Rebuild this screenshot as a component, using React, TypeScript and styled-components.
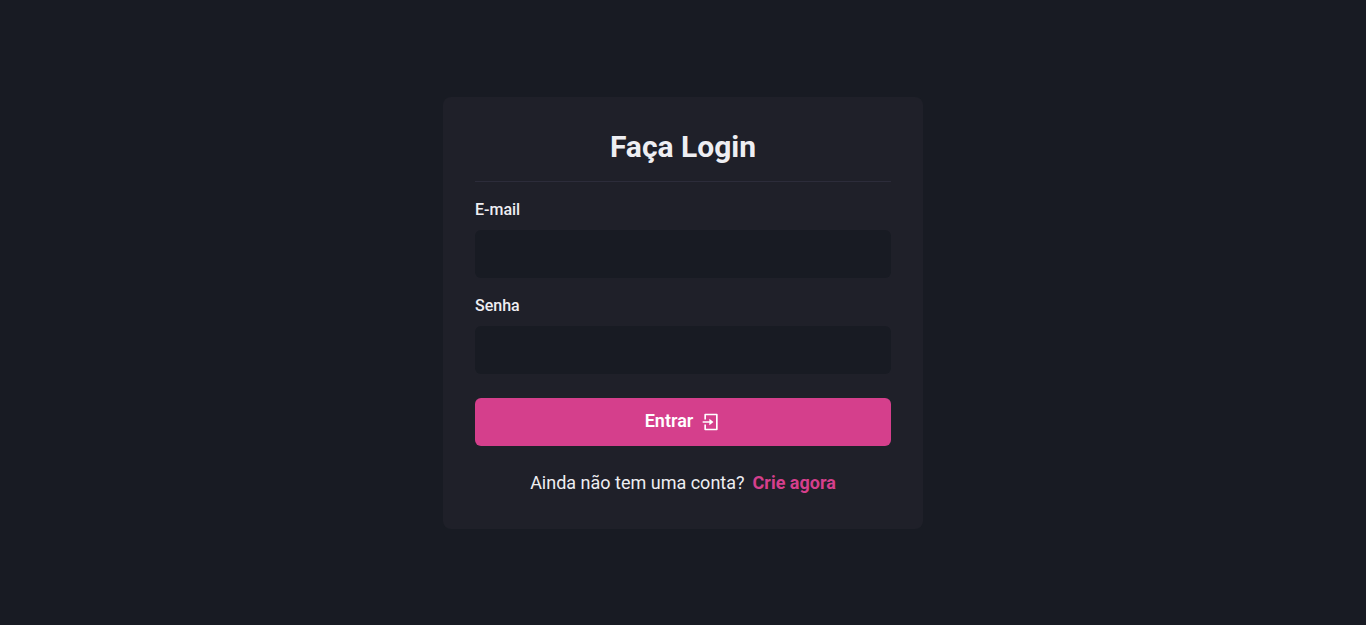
import React from "react";
import styled, { createGlobalStyle } from "styled-components";
import { RiLoginBoxLine } from "react-icons/ri";

const GlobalStyle = createGlobalStyle`
  *, *::before, *::after { box-sizing: border-box; margin: 0; padding: 0; }
  body { background: #181b23; color: #eeeef2; font-family: Roboto, sans-serif; }
`;

const Page = styled.main`
  display: flex;
  align-items: center;
  justify-content: center;
  height: 100vh;
`;

const Card = styled.form`
  display: flex;
  flex-direction: column;
  width: 480px;
  height: 432px;
  padding: 32px;
  border-radius: 8px;
  background: #1f2029;
`;

const Title = styled.h1`
  height: 36px;
  font-size: 30px;
  line-height: 36px;
  font-weight: 700;
  text-align: center;
`;

const Divider = styled.hr`
  margin: 16px 0;
  border: 0;
  border-bottom: 1px solid #353646;
  opacity: 0.6;
`;

const Field = styled.div`
  display: flex;
  flex-direction: column;
  margin-bottom: 16px;
`;

const Label = styled.label`
  margin-bottom: 8px;
  font-size: 16px;
  line-height: 24px;
  font-weight: 500;
`;

const Input = styled.input`
  width: 100%;
  height: 48px;
  padding: 0 16px;
  border: 0;
  border-radius: 6px;
  outline: 0;
  background: #181b23;
  color: inherit;
  font: inherit;
`;

const SubmitButton = styled.button`
  display: flex;
  align-items: center;
  justify-content: center;
  gap: 8px;
  height: 48px;
  margin-top: 8px;
  border: 0;
  border-radius: 6px;
  background: #d53f8c;
  color: #fff;
  font: 600 18px/22px Roboto, sans-serif;
`;

const ButtonLabel = styled.span`
  padding-bottom: 2px;
`;

const SignUp = styled.p`
  display: flex;
  justify-content: center;
  gap: 8px;
  margin-top: 23px;
  font-size: 18px;
  line-height: 27px;
`;

const SignUpLink = styled.a`
  color: #d53f8c;
  font-weight: 700;
  text-decoration: none;
`;

export default function App() {
  return (
    <>
      <GlobalStyle />
      <Page>
        <Card onSubmit={(event) => event.preventDefault()}>
          <Title>Faça Login</Title>
          <Divider />
          <Field>
            <Label htmlFor="email">E-mail</Label>
            <Input id="email" type="email" />
          </Field>
          <Field>
            <Label htmlFor="password">Senha</Label>
            <Input id="password" type="password" />
          </Field>
          <SubmitButton type="submit">
            <ButtonLabel>Entrar</ButtonLabel>
            <RiLoginBoxLine size={20} aria-hidden="true" />
          </SubmitButton>
          <SignUp>
            Ainda não tem uma conta?
            <SignUpLink href="#">Crie agora</SignUpLink>
          </SignUp>
        </Card>
      </Page>
    </>
  );
}
